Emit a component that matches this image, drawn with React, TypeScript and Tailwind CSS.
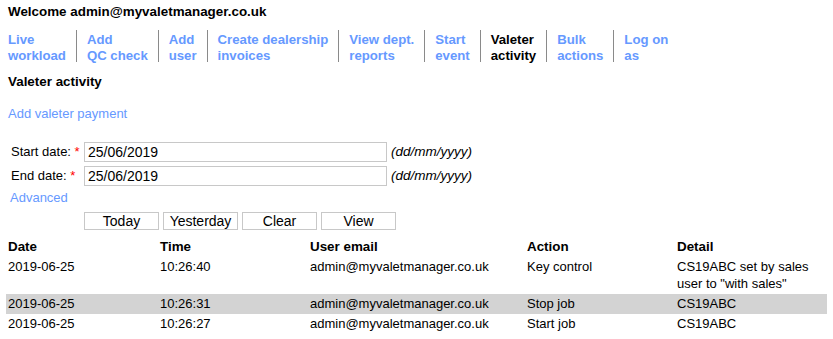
import React from 'react'

type NavItem = { top: string; bottom: string; active?: boolean }

const navItems: NavItem[] = [
  { top: 'Live', bottom: 'workload' },
  { top: 'Add', bottom: 'QC check' },
  { top: 'Add', bottom: 'user' },
  { top: 'Create dealership', bottom: 'invoices' },
  { top: 'View dept.', bottom: 'reports' },
  { top: 'Start', bottom: 'event' },
  { top: 'Valeter', bottom: 'activity', active: true },
  { top: 'Bulk', bottom: 'actions' },
  { top: 'Log on', bottom: 'as' },
]

type Row = { date: string; time: string; email: string; action: string; detail: string }

const rows: Row[] = [
  { date: '2019-06-25', time: '10:26:40', email: 'admin@myvaletmanager.co.uk', action: 'Key control', detail: 'CS19ABC set by sales user to "with sales"' },
  { date: '2019-06-25', time: '10:26:31', email: 'admin@myvaletmanager.co.uk', action: 'Stop job', detail: 'CS19ABC' },
  { date: '2019-06-25', time: '10:26:27', email: 'admin@myvaletmanager.co.uk', action: 'Start job', detail: 'CS19ABC' },
]

function DateField({ label, value }: { label: string; value: string }) {
  return (
    <div className="flex items-center h-[20px]">
      <div className="w-[76px] pl-[3px] whitespace-nowrap">
        {label} <span className="text-[#ff0000]">*</span>
      </div>
      <input
        readOnly
        value={value}
        className="w-[303px] h-[20px] border border-[#c8c8c8] px-[3px] text-[14px] text-black outline-none"
      />
      <span className="ml-[4px] italic text-[13.5px]">(dd/mm/yyyy)</span>
    </div>
  )
}

export default function App() {
  return (
    <div className="min-h-[339px] bg-white px-[8px] pt-[4px] font-['Liberation_Sans',Arial,sans-serif] text-[13px] leading-[16px] text-black">
      <div className="font-bold text-[13.4px]">Welcome admin@myvaletmanager.co.uk</div>

      <div className="mt-[10px] flex font-bold text-[13.2px]">
        {navItems.map((item, i) => (
          <div
            key={i}
            className={
              (i === 0 ? 'pr-[10px] ' : 'border-l border-[#8a8a8a] px-[10px] ') +
              'pt-[2px] h-[32px] whitespace-nowrap ' +
              (item.active ? 'text-black' : 'text-[#6699ff]')
            }
          >
            <div>{item.top}</div>
            <div>{item.bottom}</div>
          </div>
        ))}
      </div>

      <div className="mt-[12px] font-bold text-[13.4px]">Valeter activity</div>

      <div className="mt-[16px] text-[#6699ff]">Add valeter payment</div>

      <div className="mt-[20px] flex flex-col gap-[4px]">
        <DateField label="Start date:" value="25/06/2019" />
        <DateField label="End date:" value="25/06/2019" />
      </div>

      <div className="mt-[4px] pl-[2px] text-[#6699ff]">Advanced</div>

      <div className="mt-[6px] ml-[76px] flex gap-[4px]">
        {['Today', 'Yesterday', 'Clear', 'View'].map((b) => (
          <button
            key={b}
            className="w-[75px] h-[18px] border border-[#c8c8c8] bg-white text-[14px] leading-[16px] text-black"
          >
            {b}
          </button>
        ))}
      </div>

      <table className="mt-[6px] -ml-[2px] w-[821px] table-fixed border-collapse text-left">
        <colgroup>
          <col className="w-[152px]" />
          <col className="w-[150px]" />
          <col className="w-[217px]" />
          <col className="w-[150px]" />
          <col className="w-[152px]" />
        </colgroup>
        <thead>
          <tr className="font-bold text-[13.4px]">
            <th className="px-[2px] pt-[2px] pb-[2px] align-top leading-[17px]">Date</th>
            <th className="px-[2px] pt-[2px] pb-[2px] align-top leading-[17px]">Time</th>
            <th className="px-[2px] pt-[2px] pb-[2px] align-top leading-[17px]">User email</th>
            <th className="px-[2px] pt-[2px] pb-[2px] align-top leading-[17px]">Action</th>
            <th className="px-[2px] pt-[2px] pb-[2px] align-top leading-[17px]">Detail</th>
          </tr>
        </thead>
        <tbody>
          {rows.map((r, i) => (
            <tr key={i} className={i === 1 ? 'bg-[#d3d3d3]' : ''}>
              <td className="px-[2px] pt-[1px] pb-[2px] align-top leading-[17px]">{r.date}</td>
              <td className="px-[2px] pt-[1px] pb-[2px] align-top leading-[17px]">{r.time}</td>
              <td className="px-[2px] pt-[1px] pb-[2px] align-top leading-[17px]">{r.email}</td>
              <td className="px-[2px] pt-[1px] pb-[2px] align-top leading-[17px]">{r.action}</td>
              <td className="px-[2px] pt-[1px] pb-[2px] align-top leading-[17px]">{r.detail}</td>
            </tr>
          ))}
        </tbody>
      </table>
    </div>
  )
}
